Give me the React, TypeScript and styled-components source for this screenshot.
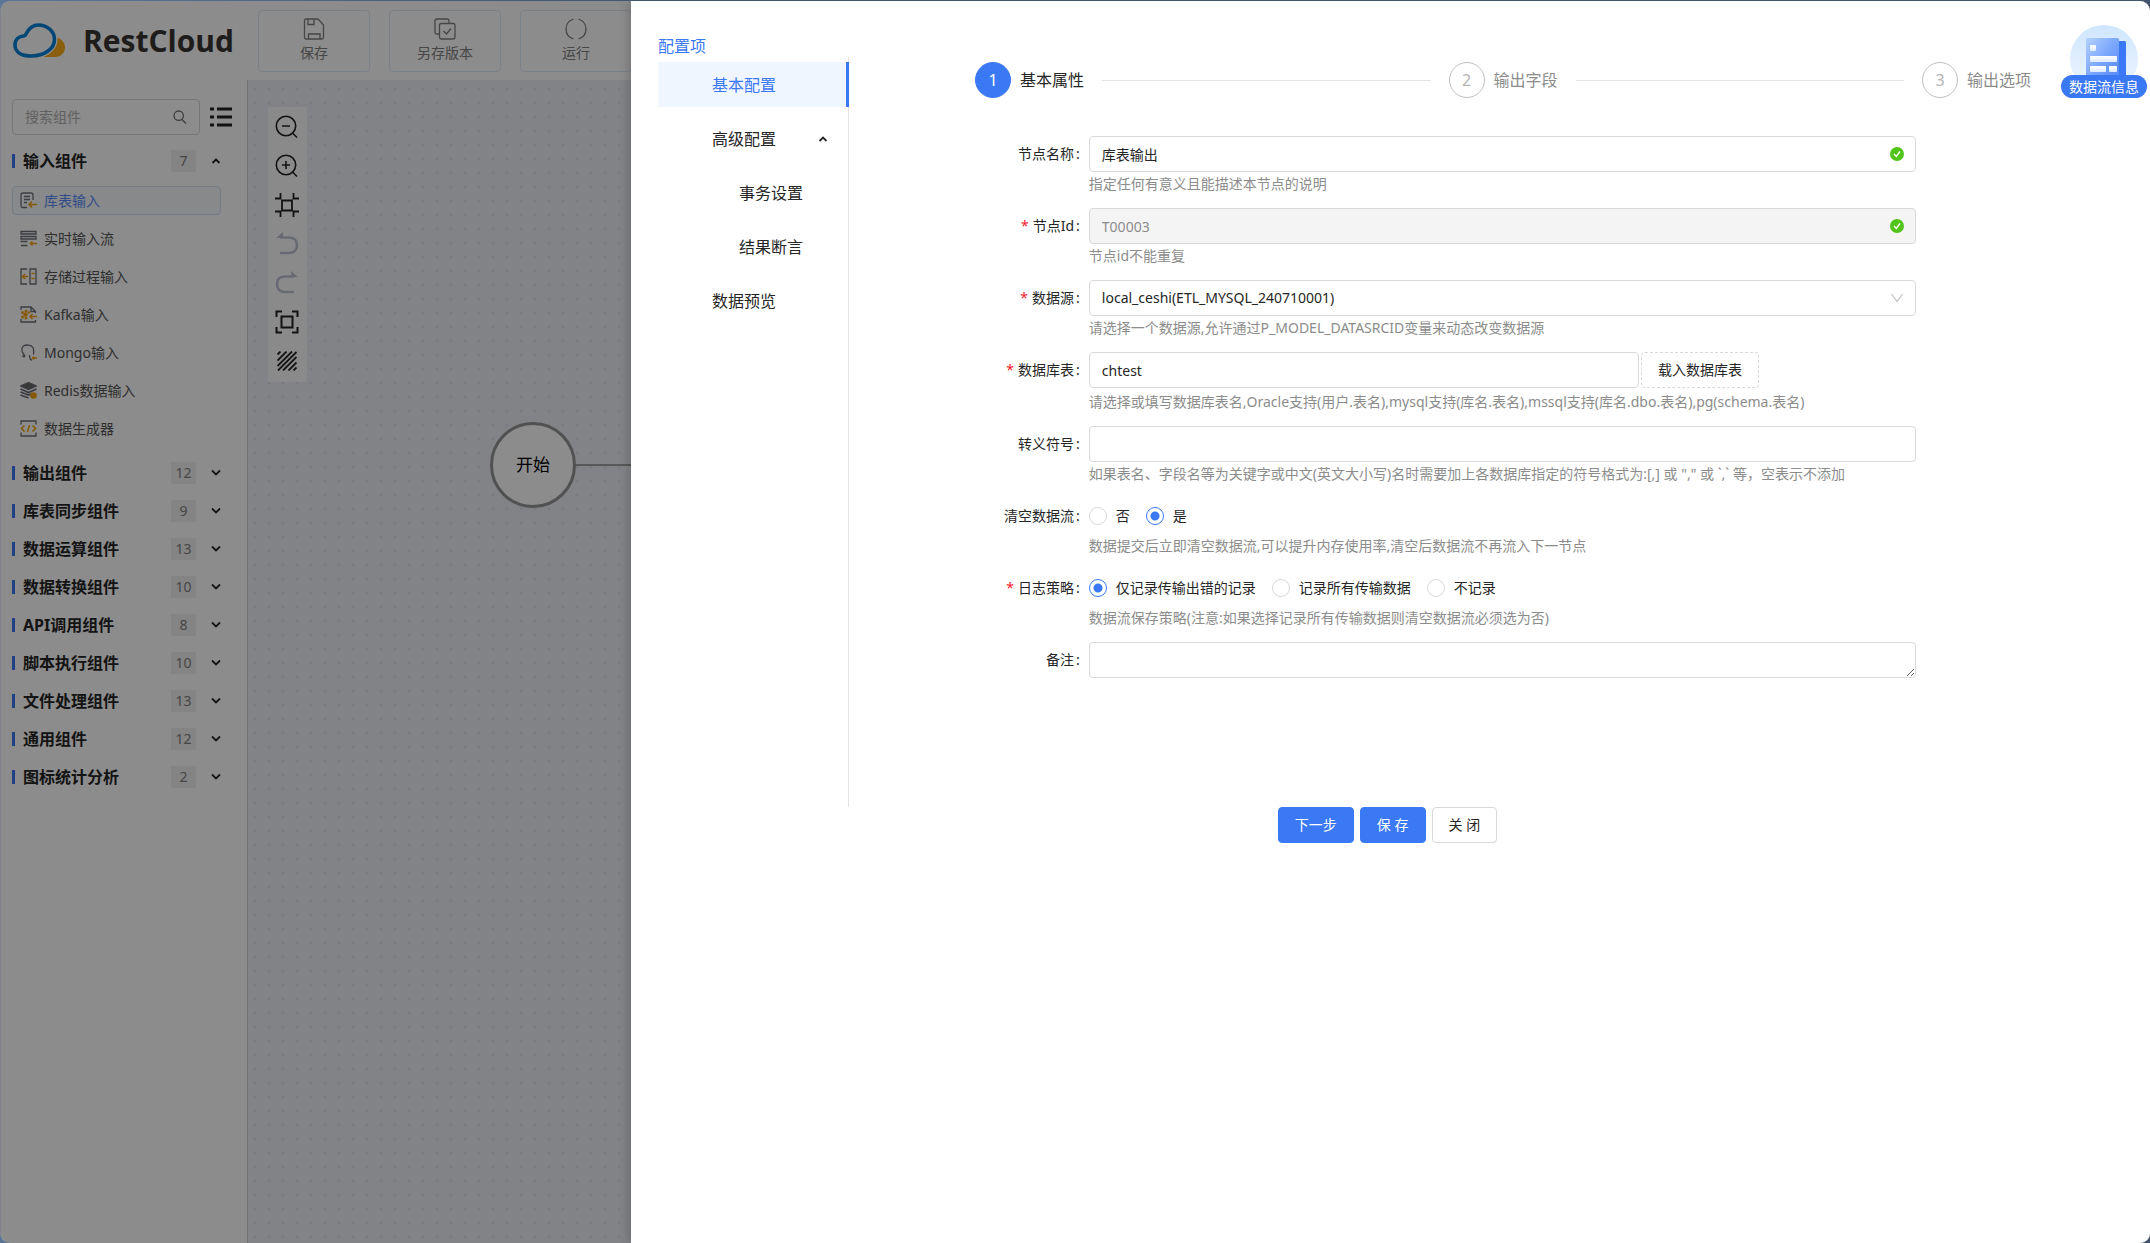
import React, { useState } from "react";
import styled, { createGlobalStyle, css } from "styled-components";

const blue = "#3b78f3";
const ink = "#262626";
const muted = "#8c8c8c";
const line = "#d9d9d9";

const GlobalStyle = createGlobalStyle`
  * { box-sizing: border-box; }
  html, body { margin: 0; }
  body {
    background: linear-gradient(90deg, #5a7598 0%, #43546e 30%, #43546e 100%);
    color: ${ink};
    font: 14px/22px "Noto Sans", "Noto Sans CJK SC", sans-serif;
  }
  button, input, select, textarea { font: inherit; color: inherit; }
  button { cursor: pointer; }
`;

const Window = styled.div`
  position: relative;
  display: flex;
  flex-direction: column;
  min-height: calc(100vh - 1px);
  margin-top: 1px;
  border-left: 1px solid #7f828a;
  border-radius: 10px;
  background: #fff;
  overflow: hidden;
`;

/* ---------- header ---------- */

const Header = styled.header`
  display: flex;
  align-items: center;
  height: 79px;
  flex: none;
`;

const Brand = styled.div`
  display: flex;
  align-items: center;
  flex: none;
  gap: 17px;
  width: 257px;
  padding-left: 12px;
  color: #3a3634;
  font: 700 30px/40px "Open Sans", sans-serif;
`;

const HeaderActions = styled.div`
  display: flex;
  gap: 19px;
`;

const HeaderButton = styled.button`
  display: flex;
  flex: none;
  flex-direction: column;
  align-items: center;
  justify-content: center;
  gap: 2px;
  width: 112px;
  height: 62px;
  padding: 0;
  border: 1px solid #dfe9f7;
  border-radius: 4px;
  background: none;
  color: #808080;
`;

/* ---------- side panel ---------- */

const Workspace = styled.div`
  display: flex;
  flex: 1;
`;

const Sidebar = styled.aside`
  flex: none;
  width: 247px;
  padding: 19px 26px 0 11px;
  border-right: 1px solid #cfcfd4;
`;

const SearchRow = styled.div`
  display: flex;
  align-items: center;
  gap: 10px;
  margin-bottom: 7px;
`;

const SearchBox = styled.label`
  display: flex;
  align-items: center;
  flex: none;
  width: 188px;
  height: 36px;
  padding: 0 12px;
  border: 1px solid ${line};
  border-radius: 4px;
  color: #707070;

  input {
    flex: 1;
    min-width: 0;
    padding: 0;
    border: 0;
    outline: 0;
    background: none;
  }
  input::placeholder { color: #b0b0b0; }
`;

const IconButton = styled.button`
  display: flex;
  padding: 0;
  border: 0;
  background: none;
  color: #222;
`;

const CategoryButton = styled.button`
  display: flex;
  align-items: center;
  width: 209px;
  height: 38px;
  padding: 0;
  border: 0;
  background: none;
  color: ${ink};
  font-size: 16px;
  font-weight: 700;

  &::before {
    content: "";
    width: 3px;
    height: 14px;
    margin-right: 8px;
    background: ${blue};
  }
  svg { width: 10px; margin: 0 0 0 15px; }
`;

const Count = styled.span`
  width: 25px;
  margin-left: auto;
  background: #f0f0f0;
  color: #808080;
  font-size: 14px;
  font-weight: 400;
  text-align: center;
`;

const ItemList = styled.ul`
  margin: 0;
  padding: 2px 0 6px;
  list-style: none;

  li { padding: 4px 0 5px; }
`;

const ItemButton = styled.button<{ $active?: boolean }>`
  display: flex;
  align-items: center;
  gap: 7px;
  width: 209px;
  height: 29px;
  padding: 0 7px;
  border: 1px solid transparent;
  border-radius: 4px;
  background: none;
  color: #555;
  ${(p) =>
    p.$active &&
    css`
      border-color: #cfe0f5;
      background: #f6f9fd;
      color: #5c8df6;
    `}
`;

const ItemIcon = styled.span`
  display: flex;
  color: #6c7078;
`;

/* ---------- canvas ---------- */

const Canvas = styled.main`
  position: relative;
  flex: 1;
  background-color: #edeff6;
  background-image: radial-gradient(circle at 7px 9px, #dfe1ea 1px, transparent 2px);
  background-size: 14px 14px;
`;

const ToolStrip = styled.div`
  position: absolute;
  left: 20px;
  top: 27px;
  width: 39px;
  padding-bottom: 2px;
  background: #fcfcfc;
`;

const Tool = styled.button<{ $off?: boolean }>`
  display: flex;
  align-items: center;
  justify-content: center;
  width: 39px;
  height: 39px;
  padding: 0 1px 0 0;
  border: 0;
  background: none;
  color: ${(p) => (p.$off ? "#bcc1cf" : "#222")};
`;

const StartNode = styled.div`
  position: absolute;
  left: 242px;
  top: 342px;
  display: flex;
  align-items: center;
  justify-content: center;
  width: 86px;
  height: 86px;
  border: 3px solid #949494;
  border-radius: 50%;
  background: #fff;
  color: #000;
  font-size: 17px;
`;

const Edge = styled.div`
  position: absolute;
  left: 328px;
  right: 0;
  top: 384px;
  height: 2px;
  background: #a0a0a0;
`;

/* ---------- drawer ---------- */

const Mask = styled.div`
  position: absolute;
  inset: 0;
  background: rgba(0, 0, 0, 0.45);
`;

const Drawer = styled.section`
  position: absolute;
  top: 0;
  right: 0;
  bottom: 0;
  left: 630px;
  padding: 34px 27px 0;
  background: #fff;
  box-shadow: -2px 0 10px rgba(0, 0, 0, 0.2);
`;

const DrawerTitle = styled.h2`
  margin: 0;
  color: ${blue};
  font-size: 16px;
  font-weight: 400;
  line-height: 22px;
`;

const Columns = styled.div`
  display: grid;
  grid-template-columns: 191px 1fr;
  column-gap: 33px;
  min-height: 750px;
`;

const Menu = styled.nav`
  display: flex;
  flex-direction: column;
  gap: 9px;
  padding-top: 5px;
  border-right: 1px solid #e3e3e3;
`;

const MenuItem = styled.button<{ $active?: boolean; $sub?: boolean }>`
  display: flex;
  align-items: center;
  justify-content: space-between;
  height: 45px;
  margin-right: -1px;
  padding: 0 18px 0 ${(p) => (p.$sub ? 81 : 54)}px;
  border: 0;
  border-right: 3px solid ${(p) => (p.$active ? blue : "transparent")};
  background: ${(p) => (p.$active ? "#eff6ff" : "none")};
  background-clip: padding-box;
  color: ${(p) => (p.$active ? blue : ink)};
  font-size: 16px;

  svg { width: 10px; }
`;

const Content = styled.div`
  padding-top: 5px;
`;

const Steps = styled.ol`
  display: flex;
  gap: 18px;
  margin: 0 0 38px;
  padding: 0 92px 0 93px;
  list-style: none;
`;

const Step = styled.li<{ $active?: boolean }>`
  display: flex;
  align-items: center;
  flex: 1;
  gap: 9px;
  color: ${(p) => (p.$active ? ink : muted)};
  font-size: 16px;
  white-space: nowrap;

  &:last-child { flex: none; }
  &:not(:last-child)::after {
    content: "";
    flex: 1;
    height: 1px;
    margin-left: 9px;
    background: #e3e3e3;
  }
`;

const StepNumber = styled.span<{ $active?: boolean }>`
  display: flex;
  align-items: center;
  justify-content: center;
  width: 36px;
  height: 36px;
  border: 1px solid ${(p) => (p.$active ? blue : "#bfbfbf")};
  border-radius: 50%;
  background: ${(p) => (p.$active ? blue : "#fff")};
  color: ${(p) => (p.$active ? "#fff" : "#b5b5b5")};
`;

const Row = styled.div`
  display: grid;
  grid-template-columns: 4fr 16fr 4fr;
  margin-bottom: 12px;
`;

const rowLabel = css`
  padding-right: 9px;
  line-height: 36px;
  text-align: right;

  &::after {
    content: ":";
    margin-left: 2px;
  }
`;

const Label = styled.label`
  ${rowLabel}
`;

const GroupLabel = styled.span`
  ${rowLabel}
`;

const Required = styled.span`
  margin-right: 4px;
  color: #f5222d;
`;

const Help = styled.p<{ $loose?: boolean }>`
  margin: ${(p) => (p.$loose ? 2 : 0)}px 0 0;
  color: ${muted};
  line-height: 24px;
`;

const Control = styled.div`
  position: relative;
  display: flex;
  align-items: center;
`;

const Suffix = styled.span<{ $color: string }>`
  position: absolute;
  right: 12px;
  display: flex;
  color: ${(p) => p.$color};
  pointer-events: none;
`;

const field = css`
  display: block;
  width: 100%;
  height: 36px;
  padding: 0 12px;
  border: 1px solid ${line};
  border-radius: 4px;
  outline: 0;
  background: #fff;
  &:focus { border-color: ${blue}; }
`;

const TextInput = styled.input`
  ${field}
  &:disabled { background: #f4f4f4; color: ${muted}; }
`;

const Select = styled.select`
  ${field}
  appearance: none;
`;

const TextArea = styled.textarea`
  ${field}
  min-height: 36px;
  padding: 6px 12px;
  resize: vertical;
`;

const Split = styled.div`
  display: grid;
  grid-template-columns: 2fr 1fr;
  gap: 2px;
  justify-items: start;
`;

const Button = styled.button<{ $kind?: "primary" | "dashed" }>`
  height: 36px;
  padding: 0 16px;
  border: 1px ${(p) => (p.$kind === "dashed" ? "dashed" : "solid")}
    ${(p) => (p.$kind === "primary" ? blue : line)};
  border-radius: 4px;
  background: ${(p) => (p.$kind === "primary" ? blue : "#fff")};
  color: ${(p) => (p.$kind === "primary" ? "#fff" : ink)};
  white-space: nowrap;
`;

const RadioGroup = styled.div`
  display: flex;
  align-items: center;
  gap: 16px;
  height: 36px;
`;

const RadioLabel = styled.label`
  display: flex;
  align-items: center;
  gap: 9px;
`;

const Radio = styled.input`
  appearance: none;
  width: 18px;
  height: 18px;
  margin: 0;
  border: 1px solid ${line};
  border-radius: 50%;
  background: #fff;
  &:checked {
    border-color: ${blue};
    background: radial-gradient(circle, ${blue} 4px, #fff 5px);
  }
`;

const Footer = styled.footer`
  display: flex;
  justify-content: center;
  gap: 6px;
  padding-right: 6px;
`;

const InfoBadge = styled.button`
  position: absolute;
  top: 24px;
  right: 3px;
  display: flex;
  flex-direction: column;
  align-items: center;
  width: 86px;
  padding: 0;
  border: 0;
  background: none;

  svg { display: block; }
  span {
    width: 86px;
    margin-top: -18px;
    border-radius: 12px;
    background: ${blue};
    color: #fff;
    line-height: 23px;
    text-align: center;
    white-space: nowrap;
  }
`;

/* ---------- drawings ---------- */

const Svg = ({
  w,
  h = w,
  box,
  sw = 1.3,
  children,
}: {
  w: number;
  h?: number;
  box: string;
  sw?: number;
  children: React.ReactNode;
}) => (
  <svg width={w} height={h} viewBox={box} fill="none" stroke="currentColor" strokeWidth={sw} aria-hidden="true">
    {children}
  </svg>
);

const CloudLogo = () => (
  <svg width="53" height="36" viewBox="0 0 53 36" fill="none" aria-hidden="true">
    <path d="M44.500 14.500C49 16.500 52 20 52 24.500C52 30 47.500 34 42 34H27C37 32 44.500 25 44.500 14.500Z" fill="#f9ab17" />
    <path
      d="M13 11C16 5 20.500 2 25.500 2C34.500 2 41.500 8.500 41.500 16.500C41.500 26 31 33 18.500 33C8.500 33 2 29 2 22C2 16.500 6 13 11.500 12.700Q12.500 12.500 13 11Z"
      stroke="#fff"
      strokeWidth="6"
    />
    <path
      d="M13 11C16 5 20.500 2 25.500 2C34.500 2 41.500 8.500 41.500 16.500C41.500 26 31 33 18.500 33C8.500 33 2 29 2 22C2 16.500 6 13 11.500 12.700Q12.500 12.500 13 11Z"
      fill="#fff"
      stroke="#0080d8"
      strokeWidth="3.600"
    />
  </svg>
);

const Chevron = ({ up }: { up?: boolean }) => (
  <Svg w={10} h={8} box="0 0 10 8" sw={1.8}>
    <path d={up ? "M1.500 6L5 2.500L8.500 6" : "M1 1.500L5 5.500L9 1.500"} />
  </Svg>
);

const SaveIcon = () => (
  <Svg w={22} box="0 0 22 22">
    <path d="M3 1H15L20.500 7V19.500Q20.500 21 19 21H3Q1.500 21 1.500 19.500V2.500Q1.500 1 3 1ZM5 1V6.500H11V1M5.500 21V16H17V21" />
  </Svg>
);

const VersionIcon = () => (
  <Svg w={22} box="0 0 22 22">
    <path d="M5 16H3Q1 16 1 14V3Q1 1 3 1H13Q15 1 15 3V5" />
    <rect x="5.500" y="5.500" width="15.500" height="15.500" rx="2" />
    <path d="M9.500 13L12.500 16L17 10.500" />
  </Svg>
);

const RunIcon = () => (
  <Svg w={22} box="0 0 22 22">
    <path d="M8.500 1C4 2.500 1 6 1 11S4 19.500 8.500 21M13.500 1C18 2.500 21 6 21 11S18 19.500 13.500 21" />
  </Svg>
);

const SearchIcon = () => (
  <Svg w={14} box="0 0 14 14">
    <circle cx="5.700" cy="5.700" r="4.700" />
    <path d="M9 9.500L13 13.500" />
  </Svg>
);

const ListIcon = () => (
  <Svg w={22} h={20} box="0 0 22 20" sw={3}>
    <path d="M0 2H4M7 2H22M0 10H4M7 10H22M0 18H4M7 18H22" />
  </Svg>
);

const CheckIcon = () => (
  <svg width="14" height="14" viewBox="0 0 14 14" aria-hidden="true">
    <circle cx="7" cy="7" r="7" fill="#52c41a" />
    <path d="M4 7L6.300 9.500L10 4.500" fill="none" stroke="#fff" strokeWidth="1.300" />
  </svg>
);

const CaretIcon = () => (
  <Svg w={14} h={10} box="0 0 14 10" sw={1.2}>
    <path d="M1.500 1L7 8.500L12.500 1" />
  </Svg>
);

const gold = "#f5a30c";

const itemIcons = [
  <Svg w={17} box="0 0 17 17">
    <path d="M7 15.500H3Q1 15.500 1 13.500V3Q1 1 3 1H11Q13 1 13 3V8M4 4.500H10M4 7.500H10M4 10.500H7" />
    <path d="M17 12.500H9.500M12 9.500L9 12.500L12 15.500" stroke={gold} strokeWidth="1.600" />
  </Svg>,
  <Svg w={17} box="0 0 17 17">
    <path d="M1 1.500H16V4H1ZM1 6.500H16V9H1ZM7.500 11.500H1V12M1 15.500H7.500" />
    <path d="M17 13.500H10.500M12.500 11.500L10.500 13.500L12.500 15.500" stroke={gold} strokeWidth="1.600" />
  </Svg>,
  <Svg w={17} box="0 0 17 17">
    <path d="M7 1H1V16H7M10 1H16V16H10Z" />
    <path d="M8 8.500H3M5 6L2.500 8.500L5 11M11.500 5.500H14.500M11.500 10.500H14.500" stroke={gold} strokeWidth="1.600" />
  </Svg>,
  <Svg w={17} box="0 0 17 17">
    <path d="M1 4V1H11L15.500 5.500V7M11 1V5.500H15.500M1 13V16H15.500V14" />
    <path d="M17 10.500H10.500M12.500 8L10 10.500L12.500 13" stroke={gold} strokeWidth="1.600" />
    <g fill={gold} stroke="none">
      <circle cx="5.500" cy="8.500" r="2.200" />
      <circle cx="2.500" cy="6.500" r="1.500" />
      <circle cx="2.500" cy="11" r="1.500" />
      <circle cx="6" cy="5" r="1.500" />
      <circle cx="6" cy="12" r="1.500" />
      <circle cx="9" cy="6.500" r="1.300" />
    </g>
  </Svg>,
  <Svg w={17} box="0 0 17 17">
    <path d="M4 10.500C1.500 8 1 4 3.500 2C6 .5 11 .5 13 3.500C14 6 14 8.500 13.500 10.500M4 10.500C2 12 3 13.500 5 12.500M4 10.500L5 12.500M9.500 11Q9.500 16 12 16" />
    <path d="M17 14H12.500M14 12.500L12.500 14L14 15.500" stroke={gold} strokeWidth="1.500" />
  </Svg>,
  <Svg w={17} box="0 0 17 17">
    <path d="M8.500 .5L16.500 4L8.500 7.500L.5 4Z" fill="#666" />
    <path d="M.5 7L8.500 10.500L16.500 7M.5 10L8.500 13L11 12M.5 13L8.500 16" strokeWidth="1.800" />
    <circle cx="13.500" cy="13.500" r="3.300" fill={gold} stroke="none" />
  </Svg>,
  <Svg w={17} box="0 0 17 17">
    <path d="M1 4.500V1H16V4.500M1 12.500V16H16V12.500" />
    <path d="M4.500 5.500L1.500 8.500L4.500 11.500M12.500 5.500L15.500 8.500L12.500 11.500M9.500 5L7.500 12" stroke={gold} strokeWidth="1.500" />
  </Svg>,
];

const items = ["库表输入", "实时输入流", "存储过程输入", "Kafka输入", "Mongo输入", "Redis数据输入", "数据生成器"];

const categories: [string, number][] = [
  ["输出组件", 12],
  ["库表同步组件", 9],
  ["数据运算组件", 13],
  ["数据转换组件", 10],
  ["API调用组件", 8],
  ["脚本执行组件", 10],
  ["文件处理组件", 13],
  ["通用组件", 12],
  ["图标统计分析", 2],
];

const tools: { name: string; off?: boolean; icon: React.ReactNode }[] = [
  {
    name: "缩小",
    icon: (
      <Svg w={24} box="0 0 24 24" sw={1.6}>
        <circle cx="11" cy="11" r="9.700" />
        <path d="M7 11H15M17 17.500L22 22.500" />
      </Svg>
    ),
  },
  {
    name: "放大",
    icon: (
      <Svg w={24} box="0 0 24 24" sw={1.6}>
        <circle cx="11" cy="11" r="9.700" />
        <path d="M7 11H15M11 7V15M17 17.500L22 22.500" />
      </Svg>
    ),
  },
  {
    name: "实际大小",
    icon: (
      <Svg w={24} box="0 0 24 24" sw={1.8}>
        <path d="M7 7.500H17V17.500H7ZM0 5.500H5.500V0M24 5.500H18.500V0M0 18.500H5.500V24M24 18.500H18.500V24" />
      </Svg>
    ),
  },
  {
    name: "撤销",
    off: true,
    icon: (
      <Svg w={24} box="0 0 24 24" sw={2.6}>
        <path d="M5 5.500H14C19 5.500 22 8.500 22 13C22 18 19 21 14 21H5" />
        <path d="M1 6L8 0V6Z" fill="currentColor" stroke="none" />
      </Svg>
    ),
  },
  {
    name: "重做",
    off: true,
    icon: (
      <Svg w={24} box="0 0 24 24" sw={2.6}>
        <path d="M19 5.500H10C5 5.500 2 8.500 2 13C2 18 5 21 10 21H19" />
        <path d="M23 6L16 0V6Z" fill="currentColor" stroke="none" />
      </Svg>
    ),
  },
  {
    name: "适应画布",
    icon: (
      <Svg w={24} box="0 0 24 24" sw={2}>
        <path d="M6.500 6.500H17.500V17.500H6.500ZM1.500 7V1.500H7M17 1.500H22.500V7M22.500 17V22.500H17M7 22.500H1.500V17" />
      </Svg>
    ),
  },
  {
    name: "背景",
    icon: (
      <Svg w={20} box="0 0 20 20" sw={1.8}>
        <path d="M.5 3.500L3.500 .5M.5 9.500L9.500 .5M.5 15L15 .5M1 19.500L19.500 1M6 19.500L19.500 6M11.500 19.500L19.500 11.500M16.500 19.500L19.500 16.500" />
      </Svg>
    ),
  },
];

const InfoArt = () => (
  <svg width="68" height="68" viewBox="0 0 68 68" aria-hidden="true">
    <defs>
      <linearGradient id="disc" x1="0" y1="0" x2="0" y2="1">
        <stop offset="0" stopColor="#cfe6ff" />
        <stop offset="0.700" stopColor="#e6f1ff" />
      </linearGradient>
      <linearGradient id="sheet" x1="0" y1="0" x2="1" y2="1">
        <stop offset="0" stopColor="#b4d1ff" />
        <stop offset="0.500" stopColor="#7aa6fc" />
        <stop offset="1" stopColor="#4f85f8" />
      </linearGradient>
      <linearGradient id="bar" x1="0" y1="0" x2="0" y2="1">
        <stop offset="0" stopColor="#fff" />
        <stop offset="1" stopColor="#dce9ff" />
      </linearGradient>
    </defs>
    <circle cx="34" cy="34" r="34" fill="url(#disc)" />
    <rect x="40" y="16" width="16" height="40" rx="1.500" fill="#3b78f8" />
    <rect x="16" y="13" width="33" height="43" rx="1.500" fill="url(#sheet)" />
    <rect x="20" y="20" width="6" height="6" rx="1" fill="url(#bar)" />
    <rect x="20" y="31" width="27" height="6" rx="1" fill="url(#bar)" />
    <rect x="20" y="41" width="16" height="6" rx="1" fill="url(#bar)" />
    <rect x="39" y="41" width="8" height="6" rx="1" fill="url(#bar)" />
  </svg>
);

/* ---------- form parts ---------- */

function Field({
  id,
  label,
  required,
  help,
  group,
  loose,
  children,
}: {
  id: string;
  label: string;
  required?: boolean;
  help?: string;
  group?: boolean;
  loose?: boolean;
  children: React.ReactNode;
}) {
  const text = (
    <>
      {required && <Required>*</Required>}
      {label}
    </>
  );
  return (
    <Row>
      {group ? <GroupLabel id={id}>{text}</GroupLabel> : <Label htmlFor={id}>{text}</Label>}
      <div>
        {children}
        {help && <Help $loose={loose}>{help}</Help>}
      </div>
    </Row>
  );
}

function Radios({ id, options, initial }: { id: string; options: string[]; initial: string }) {
  const [value, setValue] = useState(initial);
  return (
    <RadioGroup role="radiogroup" aria-labelledby={id}>
      {options.map((o) => (
        <RadioLabel key={o}>
          <Radio type="radio" name={id} checked={value === o} onChange={() => setValue(o)} />
          {o}
        </RadioLabel>
      ))}
    </RadioGroup>
  );
}

export default function App() {
  return (
    <>
      <GlobalStyle />
      <Window>
        <Header>
          <Brand>
            <CloudLogo />
            RestCloud
          </Brand>
          <HeaderActions>
            <HeaderButton>
              <SaveIcon />
              保存
            </HeaderButton>
            <HeaderButton>
              <VersionIcon />
              另存版本
            </HeaderButton>
            <HeaderButton>
              <RunIcon />
              运行
            </HeaderButton>
          </HeaderActions>
        </Header>

        <Workspace>
          <Sidebar>
            <SearchRow>
              <SearchBox>
                <input type="text" placeholder="搜索组件" aria-label="搜索组件" />
                <SearchIcon />
              </SearchBox>
              <IconButton aria-label="列表">
                <ListIcon />
              </IconButton>
            </SearchRow>
            <CategoryButton>
              输入组件
              <Count>7</Count>
              <Chevron up />
            </CategoryButton>
            <ItemList>
              {items.map((name, i) => (
                <li key={name}>
                  <ItemButton $active={i === 0}>
                    <ItemIcon>{itemIcons[i]}</ItemIcon>
                    {name}
                  </ItemButton>
                </li>
              ))}
            </ItemList>
            {categories.map(([name, count]) => (
              <CategoryButton key={name}>
                {name}
                <Count>{count}</Count>
                <Chevron />
              </CategoryButton>
            ))}
          </Sidebar>

          <Canvas>
            <ToolStrip>
              {tools.map((t) => (
                <Tool key={t.name} $off={t.off} aria-label={t.name}>
                  {t.icon}
                </Tool>
              ))}
            </ToolStrip>
            <Edge />
            <StartNode>开始</StartNode>
          </Canvas>
        </Workspace>

        <Mask />

        <Drawer>
          <DrawerTitle>配置项</DrawerTitle>
          <Columns>
            <Menu>
              <MenuItem $active>基本配置</MenuItem>
              <MenuItem>
                高级配置
                <Chevron up />
              </MenuItem>
              <MenuItem $sub>事务设置</MenuItem>
              <MenuItem $sub>结果断言</MenuItem>
              <MenuItem>数据预览</MenuItem>
            </Menu>

            <Content>
              <Steps>
                {["基本属性", "输出字段", "输出选项"].map((s, i) => (
                  <Step key={s} $active={i === 0}>
                    <StepNumber $active={i === 0}>{i + 1}</StepNumber>
                    {s}
                  </Step>
                ))}
              </Steps>

              <form onSubmit={(e) => e.preventDefault()}>
                <Field id="name" label="节点名称" help="指定任何有意义且能描述本节点的说明">
                  <Control>
                    <TextInput id="name" defaultValue="库表输出" />
                    <Suffix $color="#52c41a">
                      <CheckIcon />
                    </Suffix>
                  </Control>
                </Field>
                <Field id="nodeId" label="节点Id" required help="节点id不能重复">
                  <Control>
                    <TextInput id="nodeId" defaultValue="T00003" disabled />
                    <Suffix $color="#52c41a">
                      <CheckIcon />
                    </Suffix>
                  </Control>
                </Field>
                <Field
                  id="source"
                  label="数据源"
                  required
                  help="请选择一个数据源,允许通过P_MODEL_DATASRCID变量来动态改变数据源"
                >
                  <Control>
                    <Select id="source">
                      <option>local_ceshi(ETL_MYSQL_240710001)</option>
                    </Select>
                    <Suffix $color="#bfbfbf">
                      <CaretIcon />
                    </Suffix>
                  </Control>
                </Field>
                <Field
                  id="table"
                  label="数据库表"
                  required
                  loose
                  help="请选择或填写数据库表名,Oracle支持(用户.表名),mysql支持(库名.表名),mssql支持(库名.dbo.表名),pg(schema.表名)"
                >
                  <Split>
                    <TextInput id="table" defaultValue="chtest" />
                    <Button type="button" $kind="dashed">
                      载入数据库表
                    </Button>
                  </Split>
                </Field>
                <Field
                  id="escape"
                  label="转义符号"
                  help={
                    '如果表名、字段名等为关键字或中文(英文大小写)名时需要加上各数据库指定的符号格式为:[,] 或 "," 或 `,` 等，空表示不添加'
                  }
                >
                  <TextInput id="escape" />
                </Field>
                <Field
                  id="clear"
                  label="清空数据流"
                  group
                  help="数据提交后立即清空数据流,可以提升内存使用率,清空后数据流不再流入下一节点"
                >
                  <Radios id="clear" options={["否", "是"]} initial="是" />
                </Field>
                <Field
                  id="log"
                  label="日志策略"
                  group
                  required
                  help="数据流保存策略(注意:如果选择记录所有传输数据则清空数据流必须选为否)"
                >
                  <Radios
                    id="log"
                    options={["仅记录传输出错的记录", "记录所有传输数据", "不记录"]}
                    initial="仅记录传输出错的记录"
                  />
                </Field>
                <Field id="remark" label="备注">
                  <TextArea id="remark" rows={1} />
                </Field>
              </form>
            </Content>
          </Columns>
          <Footer>
            <Button $kind="primary">下一步</Button>
            <Button $kind="primary">保 存</Button>
            <Button>关 闭</Button>
          </Footer>
          <InfoBadge>
            <InfoArt />
            <span>数据流信息</span>
          </InfoBadge>
        </Drawer>
      </Window>
    </>
  );
}
